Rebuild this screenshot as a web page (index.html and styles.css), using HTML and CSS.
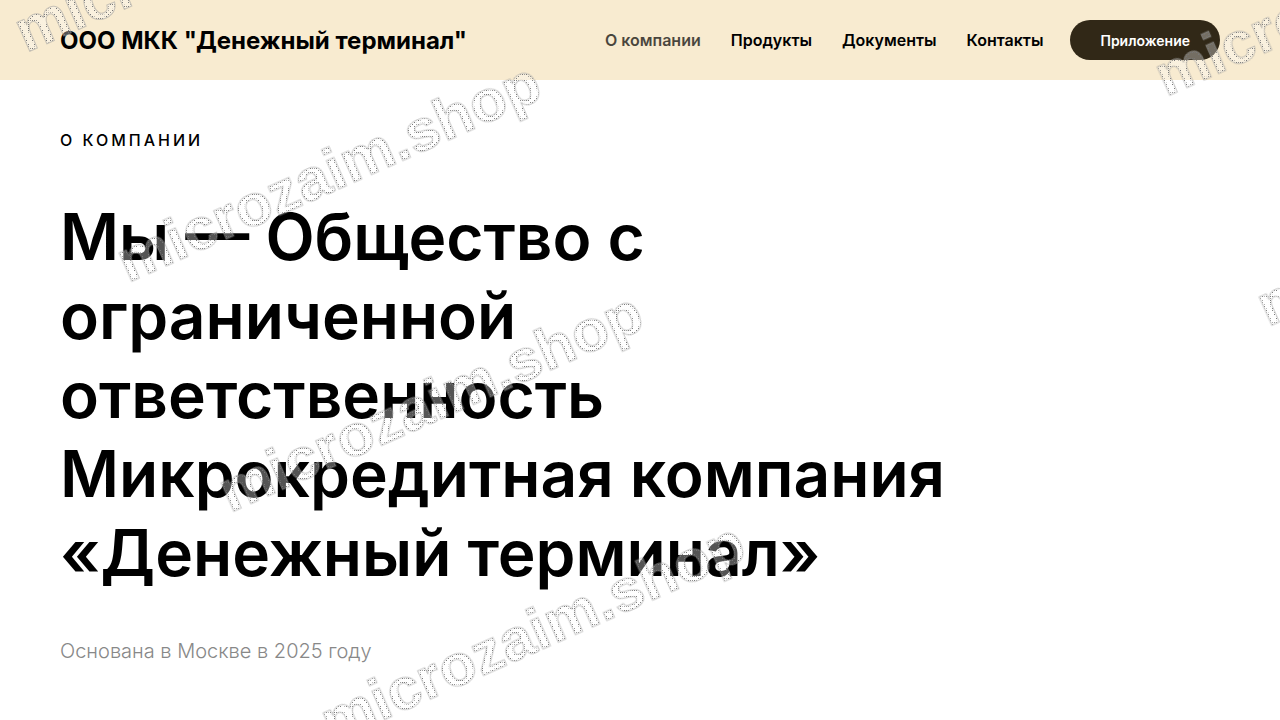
FILE: index.html
```html
<!DOCTYPE html>
<html lang="ru">
<head>
    <meta charset="UTF-8">
    <meta name="viewport" content="width=device-width, initial-scale=1.0">
    <title>ООО МКК "Денежный терминал"</title>
    <link rel="stylesheet" href="styles.css">
</head>
<body>

    <header class="header">
        <a class="logo" href="#">ООО МКК "Денежный терминал"</a>
        <nav class="menu">
            <a class="active" href="#about">О компании</a>
            <a href="#products">Продукты</a>
            <a href="#documents">Документы</a>
            <a href="#contacts">Контакты</a>
        </nav>
        <button class="app-button" type="button">Приложение</button>
    </header>

    <main class="about" id="about">
        <p class="label">О компании</p>
        <h1>Мы — Общество с ограниченной ответственность Микрокредитная компания «Денежный терминал»</h1>
        <p class="founded">Основана в Москве в 2025 году</p>
    </main>

    <!-- watermark -->
    <svg class="watermark" aria-hidden="true">
        <defs>
            <!-- dotted line inside the letters -->
            <filter id="dots" filterUnits="userSpaceOnUse" x="-100" y="-300" width="2000" height="1300" color-interpolation-filters="sRGB">
                <feComponentTransfer in="SourceAlpha" result="solid">
                    <feFuncA type="linear" slope="3"/>
                </feComponentTransfer>
                <feMorphology in="solid" operator="erode" radius="1" result="outer"/>
                <feMorphology in="solid" operator="erode" radius="2" result="inner"/>
                <feComposite in="outer" in2="inner" operator="out" result="ring"/>
                <feFlood x="0" y="0" width="1" height="1" flood-color="#777" result="dot"/>
                <feMerge x="0" y="0" width="2" height="2" result="cell">
                    <feMergeNode in="dot"/>
                </feMerge>
                <feTile in="cell" result="grid"/>
                <feComposite in="grid" in2="ring" operator="in" result="line"/>
                <feMerge>
                    <feMergeNode in="SourceGraphic"/>
                    <feMergeNode in="line"/>
                </feMerge>
            </filter>
        </defs>
        <g filter="url(#dots)">
            <text transform="translate(26 53) rotate(-24)">microzaim.shop</text>
            <text transform="translate(128 283) rotate(-24)">microzaim.shop</text>
            <text transform="translate(230 513) rotate(-24)">microzaim.shop</text>
            <text transform="translate(332 743) rotate(-24)">microzaim.shop</text>
            <text transform="translate(1166 97) rotate(-24)">microzaim.shop</text>
            <text transform="translate(1268 327) rotate(-24)">microzaim.shop</text>
        </g>
    </svg>

</body>
</html>
```

FILE: styles.css
```css
* {
    box-sizing: border-box;
}
body {
    margin: 0;
    font-family: Inter, Arial, sans-serif;
    background-color: #fff;
    color: #000;
}
.header {
    display: flex;
    align-items: center;
    min-height: 80px;
    padding: 20px 60px;
    background-color: #f8ebd0;
}
.header a {
    color: #000;
    text-decoration: none;
}
.logo {
    font-size: 24px;
    font-weight: 700;
}
.menu {
    display: flex;
    gap: 30px;
    margin-left: auto;
    font-size: 16px;
    font-weight: 600;
}
.menu .active {
    opacity: 0.7;
}
.app-button {
    height: 40px;
    margin-left: 27px;
    padding: 0 30px;
    border: none;
    border-radius: 20px;
    background-color: #312817;
    color: #fff;
    font-family: inherit;
    font-size: 14px;
    font-weight: 600;
    cursor: pointer;
}
.about {
    padding: 50px 60px;
}
.label {
    margin: 0 0 47px;
    font-size: 16px;
    line-height: 20px;
    font-weight: 500;
    letter-spacing: 3px;
    text-transform: uppercase;
}
h1 {
    max-width: 900px;
    margin: 0 0 44px;
    font-size: 64px;
    line-height: 79px;
    font-weight: 600;
}
.founded {
    margin: 0;
    font-size: 20px;
    line-height: 30px;
    font-weight: 300;
    color: #888;
}
.watermark {
    position: absolute;
    top: 0;
    left: 0;
    width: 100%;
    height: 100%;
    overflow: hidden;
    pointer-events: none;
}
.watermark text {
    font-family: "Liberation Sans", Arial, sans-serif;
    font-size: 60px;
    font-weight: 700;
    fill: rgba(255, 255, 255, 0.33);
    stroke: rgba(150, 150, 150, 0.5);
    stroke-width: 1px;
}
```
